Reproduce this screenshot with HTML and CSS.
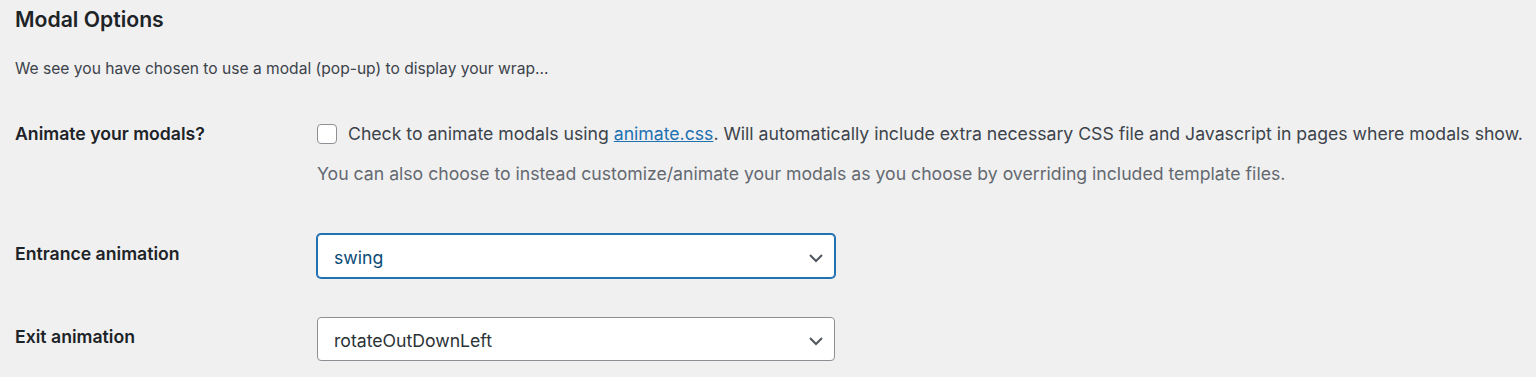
FILE: index.html
```html
<!DOCTYPE html>
<html>
<head>
    <meta charset="utf-8">
    <title>Modal Options</title>
    <link rel="stylesheet" href="styles.css">
</head>
<body>

<h2>Modal Options</h2>

<p class="intro">We see you have chosen to use a modal (pop-up) to display your wrap&hellip;</p>

<div class="row first">
    <div class="label">Animate your modals?</div>
    <div class="field">
        <label class="check">
            <span class="box"></span>
            <span>Check to animate modals using <a href="#">animate.css</a>. Will automatically include extra necessary CSS file and Javascript in pages where modals show.</span>
        </label>
        <p class="description">You can also choose to instead customize/animate your modals as you choose by overriding included template files.</p>
    </div>
</div>

<div class="row second">
    <div class="label">Entrance animation</div>
    <div class="field">
        <div class="select focused">
            <span>swing</span>
            <svg width="16" height="16" viewBox="0 0 16 16"><polyline points="2,5 8,11 14,5" fill="none" stroke="#50575e" stroke-width="2"/></svg>
        </div>
    </div>
</div>

<div class="row third">
    <div class="label">Exit animation</div>
    <div class="field">
        <div class="select">
            <span>rotateOutDownLeft</span>
            <svg width="16" height="16" viewBox="0 0 16 16"><polyline points="2,5 8,11 14,5" fill="none" stroke="#50575e" stroke-width="2"/></svg>
        </div>
    </div>
</div>

</body>
</html>
```

FILE: styles.css
```css
body {
    margin: 0;
    padding: 0 0 0 15px;
    background-color: #f0f0f1;
    color: #3c434a;
    font-family: Inter, "Liberation Sans", sans-serif;
    font-size: 15.6px;
    line-height: 24px;
}

h2 {
    margin: 6px 0 0;
    font-size: 21.2px;
    line-height: 27px;
    font-weight: 600;
    color: #1d2327;
}

.intro {
    margin: 24px 0 0;
}

.row {
    display: grid;
    grid-template-columns: 302px 1fr;
    font-size: 17.65px;
}

.row.first {
    margin-top: 41px;
}

.row.second {
    margin-top: 48px;
}

.row.third {
    margin-top: 39px;
}

.label {
    font-weight: 600;
    color: #1d2327;
}

.second .label,
.third .label {
    padding-top: 8px;
}

.check {
    display: flex;
    align-items: center;
    gap: 11px;
}

.box {
    flex: none;
    width: 18px;
    height: 18px;
    border: 1px solid #8c8f94;
    border-radius: 4px;
    background-color: #fff;
}

a {
    color: #2271b1;
}

.description {
    margin: 16px 0 0;
    color: #646970;
}

.select {
    box-sizing: border-box;
    width: 518px;
    height: 44px;
    padding: 3px 10px 0 16px;
    display: flex;
    align-items: center;
    justify-content: space-between;
    border: 1px solid #8c8f94;
    border-radius: 4px;
    background-color: #fff;
    color: #2c3338;
}

.select.focused {
    border-color: #2271b1;
    box-shadow: 0 0 0 1px #2271b1;
    color: #0a4b78;
}
```
